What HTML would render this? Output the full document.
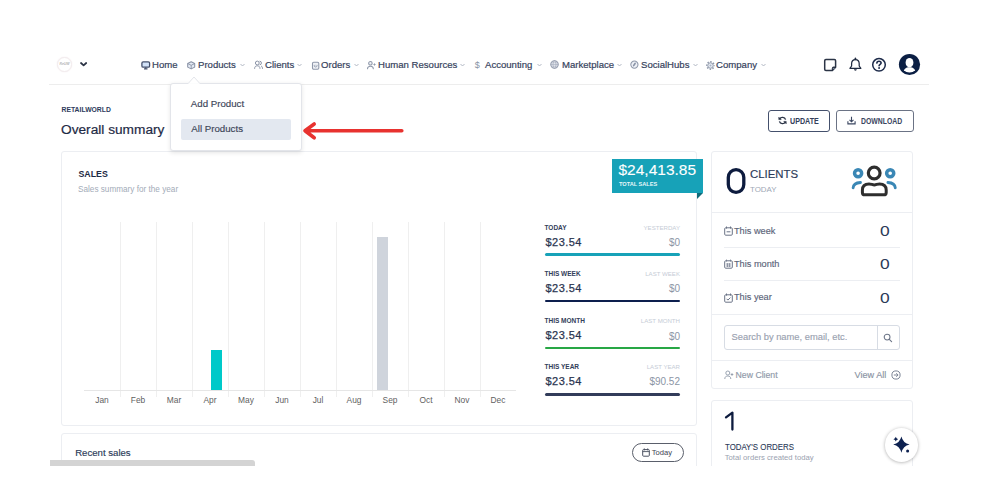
<!DOCTYPE html>
<html><head><meta charset="utf-8">
<style>
html,body{margin:0;padding:0;background:#fff;width:1000px;height:500px;overflow:hidden;position:relative;font-family:"Liberation Sans",sans-serif;}
.a{position:absolute;}
.t{position:absolute;line-height:1;white-space:nowrap;}
.card{position:absolute;border:1px solid #eceef2;border-radius:3px;background:#fff;box-sizing:border-box;}
.nav{font-size:9.9px;color:#36425c;-webkit-text-stroke:0.2px #36425c;top:60.2px;transform:scaleX(0.97);transform-origin:0 0;}
.chev{position:absolute;top:63px;}
.grid{position:absolute;top:222px;width:1px;height:175px;background:#efefef;}
.mon{position:absolute;top:395.8px;font-size:8.4px;color:#5f5f5f;line-height:1;width:36px;text-align:center;}
.lab{font-weight:bold;font-size:6.5px;color:#33405a;}
.labr{font-size:6.1px;color:#c6ccd6;text-align:right;}
.amt{margin-left:1px;font-size:11px;letter-spacing:0.45px;color:#2a3550;-webkit-text-stroke:0.25px #2a3550;}
.amtr{font-size:10px;color:#8c95a5;text-align:right;}
.bar{position:absolute;left:545px;width:135px;height:2.6px;border-radius:2px;}
.row{font-size:9.2px;color:#5b6479;-webkit-text-stroke:0.15px #5b6479;}
.rowv{font-size:14.5px;transform:scaleX(1.2);transform-origin:0 0;color:#2b3a58;}
.hr{position:absolute;height:1px;background:#eceef2;}
</style></head><body>

<!-- HEADER -->
<div class="a" style="left:57px;top:57px;width:13px;height:13px;border-radius:50%;border:1px solid #f3ecee;background:#fff;box-shadow:0 0 1.5px #f1e9eb;"></div>
<div class="t" style="left:59px;top:63.3px;font-size:3.4px;color:#8d8d8d;width:11px;text-align:center;font-style:italic;">ReUW</div>
<svg class="a" style="left:79px;top:61px" width="9" height="6" viewBox="0 0 9 6"><path d="M2 2 L4.6 4.3 L7.2 2" fill="none" stroke="#2b3345" stroke-width="1.75" stroke-linecap="round" stroke-linejoin="round"/></svg>

<div class="hr" style="left:49px;top:84px;width:880px;background:#ededed;"></div>

<!-- nav icons -->
<svg class="a" style="left:141px;top:60.5px" width="10" height="9" viewBox="0 0 10 9"><rect x="0.9" y="0.9" width="7.7" height="5.3" rx="1.3" fill="#d2e2f8" stroke="#44506c" stroke-width="1.3"/><path d="M4.75 6.2V7.6M3 7.9H6.5" stroke="#44506c" stroke-width="1.2"/></svg>
<div class="t nav" style="left:152px;">Home</div>

<svg class="a" style="left:186.8px;top:60.8px" width="9" height="9" viewBox="0 0 9 9"><path d="M4.2 0.7L7.7 2.5V6.1L4.2 7.9L0.7 6.1V2.5Z" fill="#e4eaf4" stroke="#8a93a6" stroke-width="1.05" stroke-linejoin="round"/><path d="M0.9 2.6L4.2 4.3L7.5 2.6M4.2 4.3V7.8" fill="none" stroke="#8a93a6" stroke-width="0.9"/></svg>
<div class="t nav" style="left:197.5px;">Products</div>
<svg class="chev" style="left:240px" width="5" height="4" viewBox="0 0 5 4"><path d="M0.5 1L2.5 3L4.5 1" fill="none" stroke="#a9b0bd" stroke-width="0.9"/></svg>

<svg class="a" style="left:254px;top:60px" width="9" height="10" viewBox="0 0 9 10"><circle cx="3.3" cy="3" r="1.9" fill="none" stroke="#8a93a6" stroke-width="1"/><path d="M0.6 8.8C0.6 6.6 1.8 5.8 3.3 5.8S6 6.6 6 8.8" fill="none" stroke="#8a93a6" stroke-width="1"/><path d="M5.6 1.2A1.8 1.8 0 0 1 5.6 4.8M7 5.9C8 6.4 8.5 7.3 8.5 8.8" fill="none" stroke="#8a93a6" stroke-width="1"/></svg>
<div class="t nav" style="left:264.5px;">Clients</div>
<svg class="chev" style="left:297px" width="5" height="4" viewBox="0 0 5 4"><path d="M0.5 1L2.5 3L4.5 1" fill="none" stroke="#a9b0bd" stroke-width="0.9"/></svg>

<svg class="a" style="left:311px;top:60.5px" width="9" height="9" viewBox="0 0 9 9"><rect x="1.5" y="1.2" width="6.3" height="7" rx="1.2" fill="#f1f3f7" stroke="#8f98aa" stroke-width="1.1"/><path d="M3.3 3.9V4.8Q3.3 6 4.65 6T6 4.8V3.9" fill="none" stroke="#8f98aa" stroke-width="0.9"/><circle cx="4.65" cy="4.2" r="0.6" fill="#c9d0dc"/></svg>
<div class="t nav" style="left:321px;">Orders</div>
<svg class="chev" style="left:353.5px" width="5" height="4" viewBox="0 0 5 4"><path d="M0.5 1L2.5 3L4.5 1" fill="none" stroke="#a9b0bd" stroke-width="0.9"/></svg>

<svg class="a" style="left:367px;top:60px" width="9" height="10" viewBox="0 0 9 10"><circle cx="3.4" cy="3.3" r="1.75" fill="#f0f2f6" stroke="#8f98aa" stroke-width="1.05"/><path d="M0.5 8.8C0.5 7.2 1.8 6.3 3.4 6.3S6.3 7.2 6.3 8.8" fill="none" stroke="#8f98aa" stroke-width="1.05" stroke-linecap="round"/><path d="M7.5 3.4V5.6M6.4 4.5H8.6" stroke="#8f98aa" stroke-width="0.9"/></svg>
<div class="t nav" style="left:378px;">Human Resources</div>
<svg class="chev" style="left:460px" width="5" height="4" viewBox="0 0 5 4"><path d="M0.5 1L2.5 3L4.5 1" fill="none" stroke="#a9b0bd" stroke-width="0.9"/></svg>

<div class="t" style="left:474.8px;top:61px;font-size:9px;color:#8a93a6;">$</div>
<div class="t nav" style="left:484.5px;">Accounting</div>
<svg class="chev" style="left:537px" width="5" height="4" viewBox="0 0 5 4"><path d="M0.5 1L2.5 3L4.5 1" fill="none" stroke="#a9b0bd" stroke-width="0.9"/></svg>

<svg class="a" style="left:550.1px;top:60.3px" width="9" height="9" viewBox="0 0 9 9"><circle cx="4.5" cy="4.5" r="3.7" fill="#eef1f6" stroke="#8a93a6" stroke-width="1.05"/><ellipse cx="4.5" cy="4.5" rx="1.5" ry="3.6" fill="none" stroke="#9aa2b3" stroke-width="0.6"/><path d="M0.9 4.5H8.1M1.4 2.8H7.6M1.4 6.2H7.6" stroke="#9aa2b3" stroke-width="0.55"/></svg>
<div class="t nav" style="left:561.5px;">Marketplace</div>
<svg class="chev" style="left:616.5px" width="5" height="4" viewBox="0 0 5 4"><path d="M0.5 1L2.5 3L4.5 1" fill="none" stroke="#a9b0bd" stroke-width="0.9"/></svg>

<svg class="a" style="left:629.8px;top:60.3px" width="9" height="9" viewBox="0 0 9 9"><circle cx="4.4" cy="4.6" r="3.6" fill="#eef1f7" stroke="#8f98aa" stroke-width="1.05"/><ellipse cx="4.4" cy="4.6" rx="0.9" ry="2.3" transform="rotate(35 4.4 4.6)" fill="#8a93a6"/></svg>
<div class="t nav" style="left:640.5px;">SocialHubs</div>
<svg class="chev" style="left:692.5px" width="5" height="4" viewBox="0 0 5 4"><path d="M0.5 1L2.5 3L4.5 1" fill="none" stroke="#a9b0bd" stroke-width="0.9"/></svg>

<svg class="a" style="left:705.6px;top:60.5px" width="9" height="9" viewBox="0 0 9 9"><circle cx="4.5" cy="4.5" r="3.75" fill="none" stroke="#8f98aa" stroke-width="1.3" stroke-dasharray="1.5 1.445" stroke-dashoffset="0.75"/><circle cx="4.5" cy="4.5" r="2.75" fill="#e9edf4" stroke="#8f98aa" stroke-width="1"/><circle cx="4.5" cy="4.5" r="1" fill="#a9b3c6"/></svg>
<div class="t nav" style="left:716.3px;">Company</div>
<svg class="chev" style="left:760.5px" width="5" height="4" viewBox="0 0 5 4"><path d="M0.5 1L2.5 3L4.5 1" fill="none" stroke="#a9b0bd" stroke-width="0.9"/></svg>

<!-- right header icons -->
<svg class="a" style="left:823px;top:58px" width="14" height="14" viewBox="0 0 14 14"><path d="M2.9 1.6H11.4Q12.6 1.6 12.6 2.8V9.2L9.4 12.4H2.9Q1.7 12.4 1.7 11.2V2.8Q1.7 1.6 2.9 1.6Z" fill="none" stroke="#2b3446" stroke-width="1.5" stroke-linejoin="round"/><path d="M12.6 9H10.4Q9.3 9 9.3 10.1V12.4Z" fill="#2b3446" stroke="#2b3446" stroke-width="1" stroke-linejoin="round"/><circle cx="10.9" cy="10.6" r="0.55" fill="#c9dcf2"/></svg>
<svg class="a" style="left:845px;top:55px" width="20" height="20" viewBox="0 0 20 20"><path d="M4.9 13.3L6.6 11V8.7C6.6 6.1 8.2 4.5 10.4 4.5S14.2 6.1 14.2 8.7V11L15.9 13.3Z" fill="none" stroke="#1f2a40" stroke-width="1.25" stroke-linejoin="round"/><path d="M10.4 3.3V4.4" stroke="#1f2a40" stroke-width="1.5" stroke-linecap="round"/><path d="M9 14.3A1.4 1.4 0 0 0 11.8 14.3Z" fill="#1f2a40"/></svg>
<svg class="a" style="left:871px;top:57px" width="16" height="16" viewBox="0 0 16 16"><circle cx="8" cy="7.8" r="6.3" fill="none" stroke="#1d2b4a" stroke-width="1.5"/><path d="M5.9 6.1C5.9 4.9 6.8 4.2 8 4.2S10.1 5 10.1 6C10.1 7.3 8.1 7.3 8.1 8.8" fill="none" stroke="#1d2b4a" stroke-width="1.6" stroke-linecap="round"/><circle cx="8.1" cy="11" r="0.95" fill="#1d2b4a"/></svg>
<svg class="a" style="left:898px;top:53px" width="23" height="23" viewBox="0 0 23 23"><circle cx="11.5" cy="11.5" r="10.6" fill="#0b1f44"/><clipPath id="cc"><circle cx="11.5" cy="11.5" r="8.1"/></clipPath><g clip-path="url(#cc)" fill="#fff"><ellipse cx="11.5" cy="9.7" rx="3.9" ry="4.8"/><path d="M4.6 21C4.9 16.8 7.6 14.8 10 14.3H13C15.4 14.8 18.1 16.8 18.4 21Z"/></g></svg>

<!-- TITLE -->
<div class="t" style="left:61.5px;top:106.9px;font-size:6.8px;font-weight:bold;color:#2d3b5c;">RETAILWORLD</div>
<div class="t" style="left:61px;top:122.9px;font-size:13.7px;color:#1e2a45;-webkit-text-stroke:0.2px #1e2a45;">Overall summary</div>

<!-- BUTTONS -->
<div class="a" style="left:768px;top:110px;width:62px;height:22px;border:1px solid #44506c;border-radius:3px;box-sizing:border-box;"></div>
<svg class="a" style="left:777.5px;top:116px" width="9" height="9" viewBox="0 0 9 9"><path d="M7.6 3.6A3.3 3.3 0 0 0 1.6 3M1.4 5.4A3.3 3.3 0 0 0 7.4 6" fill="none" stroke="#2b3446" stroke-width="1.4"/><path d="M0.8 1.2V3.6H3.2Z M8.2 7.8V5.4H5.8Z" fill="#2b3446" stroke="#2b3446" stroke-width="0.6"/></svg>
<div class="t" style="left:790.3px;top:118px;font-size:8.2px;font-weight:bold;color:#33405a;transform:scaleX(0.87);transform-origin:0 0;">UPDATE</div>
<div class="a" style="left:835.5px;top:110px;width:78px;height:22px;border:1px solid #6b7385;border-radius:3px;box-sizing:border-box;"></div>
<svg class="a" style="left:847px;top:116px" width="9" height="9" viewBox="0 0 9 9"><path d="M4.5 0.8V5.6M2.5 3.8L4.5 5.8L6.5 3.8M0.9 5.3V7.9H8.1V5.3" fill="none" stroke="#3a4660" stroke-width="1.1"/></svg>
<div class="t" style="left:861px;top:118px;font-size:8.2px;font-weight:bold;color:#3a4660;transform:scaleX(0.84);transform-origin:0 0;">DOWNLOAD</div>

<!-- SALES CARD -->
<div class="card" style="left:61px;top:151px;width:636px;height:275px;"></div>
<div class="t" style="left:78.5px;top:170.4px;font-size:8.8px;font-weight:bold;color:#1e2a45;">SALES</div>
<div class="t" style="left:78px;top:186.4px;font-size:8.2px;color:#a3abb8;">Sales summary for the year</div>

<!-- chart -->
<div class="grid" style="left:120px"></div>
<div class="grid" style="left:156px"></div>
<div class="grid" style="left:192px"></div>
<div class="grid" style="left:228px"></div>
<div class="grid" style="left:264px"></div>
<div class="grid" style="left:300px"></div>
<div class="grid" style="left:336px"></div>
<div class="grid" style="left:372px"></div>
<div class="grid" style="left:408px"></div>
<div class="grid" style="left:444px"></div>
<div class="grid" style="left:480px"></div>
<div class="a" style="left:84px;top:390px;width:432px;height:1px;background:#e6e6e6;"></div>
<div class="a" style="left:211px;top:350px;width:11px;height:40px;background:#00c9c9;"></div>
<div class="a" style="left:376.5px;top:237px;width:11.5px;height:153px;background:#cfd4dc;"></div>
<div class="mon" style="left:84px">Jan</div>
<div class="mon" style="left:120px">Feb</div>
<div class="mon" style="left:156px">Mar</div>
<div class="mon" style="left:192px">Apr</div>
<div class="mon" style="left:228px">May</div>
<div class="mon" style="left:264px">Jun</div>
<div class="mon" style="left:300px">Jul</div>
<div class="mon" style="left:336px">Aug</div>
<div class="mon" style="left:372px">Sep</div>
<div class="mon" style="left:408px">Oct</div>
<div class="mon" style="left:444px">Nov</div>
<div class="mon" style="left:480px">Dec</div>

<!-- total badge -->
<div class="a" style="left:612px;top:159px;width:91px;height:34px;background:#17a2b8;"></div>
<div class="a" style="left:697px;top:193px;width:0;height:0;border-top:6px solid #0f6b7a;border-right:6px solid transparent;"></div>
<div class="t" style="left:618.5px;top:161.8px;font-size:15.5px;color:#fff;-webkit-text-stroke:0.1px #fff;">$24,413.85</div>
<div class="t" style="left:619px;top:182.3px;font-size:5.6px;font-weight:bold;color:#e6f6f9;">TOTAL SALES</div>

<!-- stats -->
<div class="t lab" style="left:544.5px;top:224.7px;">TODAY</div>
<div class="t labr" style="right:320px;top:225px;">YESTERDAY</div>
<div class="t amt" style="left:544.5px;top:236.7px;">$23.54</div>
<div class="t amtr" style="right:320px;top:238px;">$0</div>
<div class="bar" style="top:253px;background:#17a2b8;"></div>

<div class="t lab" style="left:544.5px;top:270.8px;">THIS WEEK</div>
<div class="t labr" style="right:320px;top:271.1px;">LAST WEEK</div>
<div class="t amt" style="left:544.5px;top:283px;">$23.54</div>
<div class="t amtr" style="right:320px;top:284.4px;">$0</div>
<div class="bar" style="top:299.8px;background:#0d1f4e;"></div>

<div class="t lab" style="left:544.5px;top:318px;">THIS MONTH</div>
<div class="t labr" style="right:320px;top:318.3px;">LAST MONTH</div>
<div class="t amt" style="left:544.5px;top:330.1px;">$23.54</div>
<div class="t amtr" style="right:320px;top:331.5px;">$0</div>
<div class="bar" style="top:346.6px;background:#28a745;"></div>

<div class="t lab" style="left:544.5px;top:363.9px;">THIS YEAR</div>
<div class="t labr" style="right:320px;top:364.2px;">LAST YEAR</div>
<div class="t amt" style="left:544.5px;top:376px;">$23.54</div>
<div class="t amtr" style="right:320px;top:377.4px;">$90.52</div>
<div class="bar" style="top:393.2px;background:#323c5a;"></div>

<!-- RECENT SALES -->
<div class="card" style="left:61px;top:433px;width:636px;height:60px;"></div>
<div class="t" style="left:75.2px;top:447.7px;font-size:9.6px;-webkit-text-stroke:0.15px #2b3a58;color:#2b3a58;">Recent sales</div>
<div class="a" style="left:631.5px;top:443px;width:52px;height:19px;border:1px solid #5a5f6b;border-radius:10px;box-sizing:border-box;"></div>
<svg class="a" style="left:641.5px;top:448px" width="8" height="9" viewBox="0 0 8 9"><rect x="0.7" y="1.6" width="6.6" height="6.6" rx="0.8" fill="none" stroke="#4a5060" stroke-width="1"/><path d="M2.3 0.4V2.4M5.7 0.4V2.4M0.7 3.6H7.3" stroke="#4a5060" stroke-width="0.9"/></svg>
<div class="t" style="left:651.7px;top:449.1px;font-size:7.6px;color:#3e4452;">Today</div>

<!-- CLIENTS CARD -->
<div class="card" style="left:711px;top:151px;width:202px;height:238px;"></div>
<svg class="a" style="left:720px;top:162.4px" width="32" height="36" viewBox="0 0 32 36"><rect x="8.3" y="7.6" width="15.5" height="22.8" rx="7.75" ry="7.9" fill="none" stroke="#0d1b3e" stroke-width="3.3"/></svg>
<div class="t" style="left:750px;top:168.5px;font-size:11.4px;-webkit-text-stroke:0.15px #2b3a58;color:#2b3a58;">CLIENTS</div>
<div class="t" style="left:750px;top:185.5px;font-size:7.9px;color:#a0a8b6;">TODAY</div>
<svg class="a" style="left:850px;top:162px" width="48" height="36" viewBox="0 0 48 36">
 <circle cx="8.1" cy="11.2" r="3.55" fill="none" stroke="#3a87b5" stroke-width="3.5"/>
 <circle cx="40.2" cy="11.2" r="3.55" fill="none" stroke="#3a87b5" stroke-width="3.5"/>
 <circle cx="24.2" cy="11" r="5.85" fill="none" stroke="#2e2e2e" stroke-width="3.2"/>
 <path d="M3.1 25.8C3.3 22.5 6 20.8 10.5 20.5" fill="none" stroke="#3a87b5" stroke-width="2.8" stroke-linecap="round"/>
 <path d="M45.3 25.8C45.1 22.5 42.4 20.8 37.9 20.5" fill="none" stroke="#3a87b5" stroke-width="2.8" stroke-linecap="round"/>
 <path d="M12.4 28C12.4 24 15 21.9 19 21.9C21 21.9 22.5 22.9 24.3 22.9C26 22.9 27.5 21.9 29.5 21.9C33.5 21.9 36.2 24 36.2 28V30.4Q36.2 32.8 33.8 32.8H14.8Q12.4 32.8 12.4 30.4Z" fill="none" stroke="#2e2e2e" stroke-width="3" stroke-linejoin="round"/>
</svg>
<div class="hr" style="left:711px;top:212px;width:202px;"></div>

<svg class="a" style="left:724px;top:226px" width="9" height="10" viewBox="0 0 9 10"><rect x="0.7" y="1.8" width="7.6" height="7.4" rx="1" fill="none" stroke="#6a7386" stroke-width="1"/><path d="M2.5 0.5V2.6M6.5 0.5V2.6M2.6 5.8H6.4" stroke="#6a7386" stroke-width="1"/></svg>
<div class="t row" style="left:734px;top:227.1px;">This week</div>
<div class="t rowv" style="left:879.6px;top:224.2px;">0</div>
<div class="hr" style="left:724px;top:247px;width:176px;"></div>

<svg class="a" style="left:724px;top:259.4px" width="9" height="10" viewBox="0 0 9 10"><rect x="0.7" y="1.8" width="7.6" height="7.4" rx="1" fill="none" stroke="#6a7386" stroke-width="1"/><path d="M2.5 0.5V2.6M6.5 0.5V2.6M2.2 5H6.8M2.2 7H6.8M3.4 4.2V8M5.6 4.2V8" stroke="#6a7386" stroke-width="0.7"/></svg>
<div class="t row" style="left:734px;top:259.9px;">This month</div>
<div class="t rowv" style="left:879.6px;top:257.4px;">0</div>
<div class="hr" style="left:724px;top:280px;width:176px;"></div>

<svg class="a" style="left:724px;top:292.6px" width="9" height="10" viewBox="0 0 9 10"><rect x="0.7" y="1.8" width="7.6" height="7.4" rx="1" fill="none" stroke="#6a7386" stroke-width="1"/><path d="M2.5 0.5V2.6M6.5 0.5V2.6M2.6 5.8L3.9 7.1L6.4 4.6" fill="none" stroke="#6a7386" stroke-width="1"/></svg>
<div class="t row" style="left:734px;top:293.1px;">This year</div>
<div class="t rowv" style="left:879.6px;top:290.6px;">0</div>
<div class="hr" style="left:711px;top:313.5px;width:202px;"></div>

<div class="a" style="left:724px;top:325px;width:176px;height:25px;border:1px solid #d7dce4;border-radius:3px;box-sizing:border-box;"></div>
<div class="a" style="left:877px;top:325px;width:1px;height:25px;background:#d7dce4;"></div>
<div class="t" style="left:731.5px;top:332.5px;font-size:9.36px;color:#9aa2b0;-webkit-text-stroke:0.15px #9aa2b0;">Search by name, email, etc.</div>
<svg class="a" style="left:882.5px;top:333px" width="10" height="10" viewBox="0 0 10 10"><circle cx="4.1" cy="4.1" r="2.9" fill="none" stroke="#6e7789" stroke-width="1.05"/><path d="M6.3 6.3L8.6 8.6" stroke="#6e7789" stroke-width="1.15" stroke-linecap="round"/></svg>
<div class="hr" style="left:711px;top:360px;width:202px;"></div>

<svg class="a" style="left:723.5px;top:369.5px" width="10" height="10" viewBox="0 0 10 10"><circle cx="3.8" cy="3" r="2" fill="none" stroke="#8f98a8" stroke-width="0.9"/><path d="M0.8 9C0.8 6.8 2.1 6 3.8 6S6.8 6.8 6.8 9" fill="none" stroke="#8f98a8" stroke-width="0.9"/><path d="M8 3.2V5.8M6.7 4.5H9.3" stroke="#8f98a8" stroke-width="0.9"/></svg>
<div class="t" style="left:735.6px;top:370.6px;font-size:8.7px;color:#8f98a8;-webkit-text-stroke:0.15px #8f98a8;">New Client</div>
<div class="t" style="left:854.6px;top:371px;font-size:9.1px;color:#8a93a3;-webkit-text-stroke:0.15px #8a93a3;">View All</div>
<svg class="a" style="left:890.5px;top:369.5px" width="10" height="10" viewBox="0 0 10 10"><circle cx="5" cy="5" r="4.1" fill="none" stroke="#7a8395" stroke-width="1"/><path d="M2.8 5H7M5.3 3.2L7.1 5L5.3 6.8" fill="none" stroke="#7a8395" stroke-width="1"/></svg>

<!-- ORDERS CARD -->
<div class="card" style="left:711px;top:400px;width:202px;height:90px;"></div>
<svg class="a" style="left:718px;top:405px" width="20" height="30" viewBox="0 0 20 30"><path d="M8 12.4L14.4 7.6V24.6" fill="none" stroke="#0d1b3e" stroke-width="2.3" stroke-linecap="round" stroke-linejoin="round"/></svg>
<div class="t" style="left:724.7px;top:442.6px;font-size:8.6px;transform:scaleX(0.915);transform-origin:0 0;color:#2b3a58;-webkit-text-stroke:0.1px #2b3a58;">TODAY'S ORDERS</div>
<div class="t" style="left:724.7px;top:454.3px;font-size:7.7px;color:#9aa2b0;">Total orders created today</div>
<div class="a" style="left:884.6px;top:428.4px;width:33.2px;height:33.2px;border-radius:50%;background:#fff;box-shadow:0 0.5px 3.5px rgba(0,0,0,0.32);"></div>
<svg class="a" style="left:884px;top:428px" width="34" height="34" viewBox="0 0 34 34"><path d="M17.4 8.4Q19 15 25.6 16.6Q19 18.2 17.4 24.8Q15.8 18.2 9.2 16.6Q15.8 15 17.4 8.4Z" fill="#0d2150"/><path d="M11.8 8.8Q12.2 10.8 14.2 11.2Q12.2 11.6 11.8 13.6Q11.4 11.6 9.4 11.2Q11.4 10.8 11.8 8.8Z" fill="#0d2150"/><circle cx="23.6" cy="23" r="1.5" fill="#0d2150"/></svg>

<!-- DROPDOWN -->
<div class="a" style="left:170px;top:83px;width:132px;height:68px;border:1px solid #e3e5ea;border-radius:3px;background:#fff;box-sizing:border-box;box-shadow:0 1.5px 4px rgba(0,0,0,0.1);"></div>
<svg class="a" style="left:187.8px;top:76px" width="12" height="8.5" viewBox="0 0 12 8.5"><path d="M0 7.7L6 1L12 7.7" fill="#fff" stroke="#e3e5ea" stroke-width="1"/><rect x="0.6" y="7.4" width="10.8" height="1.1" fill="#fff"/></svg>
<div class="t" style="left:190.8px;top:99.2px;font-size:9.7px;color:#3c4558;-webkit-text-stroke:0.15px #3c4558;">Add Product</div>
<div class="a" style="left:181px;top:118.5px;width:110px;height:21.5px;background:#e3e8f0;border-radius:2px;"></div>
<div class="t" style="left:191.3px;top:123.9px;font-size:9.7px;color:#3c4558;-webkit-text-stroke:0.15px #3c4558;">All Products</div>

<!-- red arrow -->
<svg class="a" style="left:300px;top:120px" width="106" height="22" viewBox="0 0 106 22"><path d="M5 10.8H101.8M14.2 4L5 10.8L14.2 17.8" fill="none" stroke="#e8322f" stroke-width="3.6" stroke-linecap="round" stroke-linejoin="round"/></svg>

<!-- bottom cover -->
<div class="a" style="left:0;top:466px;width:1000px;height:34px;background:#fff;"></div>
<div class="a" style="left:50px;top:460px;width:205px;height:6px;background:#d4d4d4;border-radius:0 3px 0 0;"></div>

</body></html>
